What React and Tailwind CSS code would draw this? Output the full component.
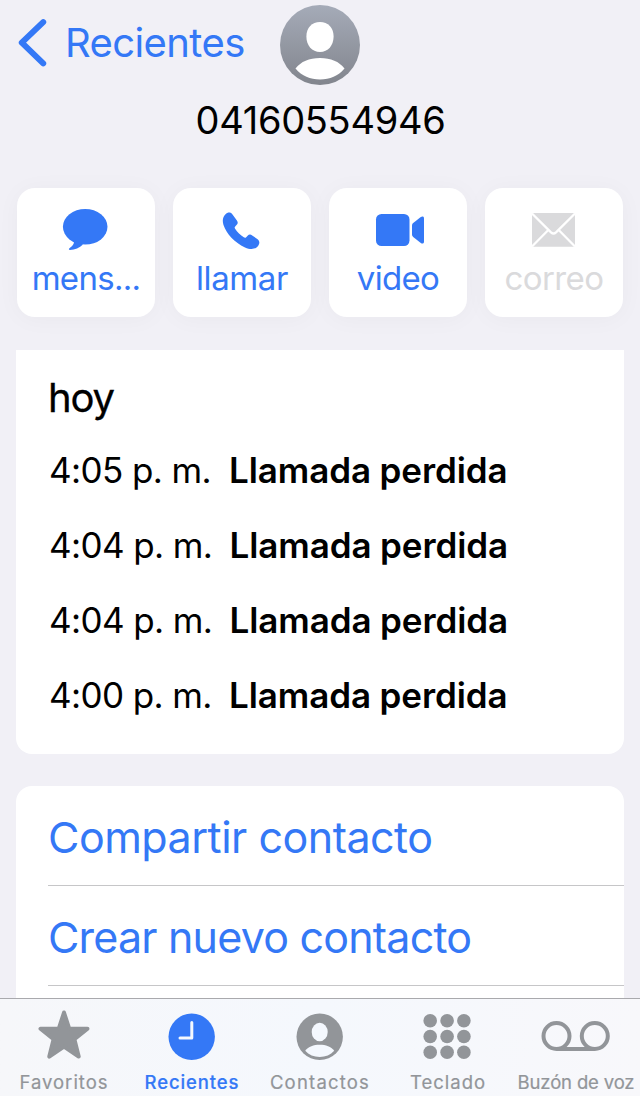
import { useState } from "react";
import clsx from "clsx";

const calls = [
  { time: "4:05 p. m.", label: "Llamada perdida", width: "w-[180px]" },
  { time: "4:04 p. m.", label: "Llamada perdida", width: "w-[180.5px]" },
  { time: "4:04 p. m.", label: "Llamada perdida", width: "w-[180.5px]" },
  { time: "4:00 p. m.", label: "Llamada perdida", width: "w-[180px]" },
];

const Avatar = () => (
  <svg viewBox="0 0 80 80" className="w-20 h-20">
    <defs>
      <linearGradient id="avatarFill" x1="0" y1="0" x2="0" y2="1">
        <stop offset="0" stopColor="#a5abb8" />
        <stop offset="1" stopColor="#82858d" />
      </linearGradient>
    </defs>
    <circle cx="40" cy="40" r="40" fill="url(#avatarFill)" />
    <path
      d="M40 17C48 17 53.600 22.500 53.600 31.500S48 47 40 47 26.400 40.500 26.400 31.500 32 17 40 17Z"
      fill="#fff"
    />
    <path
      d="M15.500 63.500C21 56.500 29 53 40 53s19 3.500 24.500 10.500C58 71 50 74.500 40 74.500S22 71 15.500 63.500Z"
      fill="#fff"
    />
  </svg>
);

const MessageIcon = () => (
  <svg viewBox="0 0 60 60" className="w-[60px] h-[60px]" fill="currentColor">
    <ellipse cx="29.2" cy="26.8" rx="22.3" ry="17.8" />
    <path d="M17 40c1.500 2 1.200 3.500-.5 5.500-1.200 1.500-2.700 2.400-3.300 3-.7.7-.2 1.500.8 1.500 5 0 9.500-2.500 13-5.500Z" />
  </svg>
);

const PhoneIcon = () => (
  <svg viewBox="0 0 60 60" className="w-[60px] h-[60px]" fill="currentColor">
    <path d="M13.300 14.600C15.800 12 18.600 12 20.500 14.400L24.900 20.400C26.200 22.300 25.900 23.700 24.500 25.100L23.200 26.400C22.400 27.300 22.500 27.900 23.100 28.800C25.200 32 28.500 35.300 31.800 37.300C32.700 37.900 33.400 37.900 34.200 37.200L35.600 35.800C36.900 34.400 38.400 34.200 40.200 35.400L45.600 39.200C48 41 47.900 44.300 45.400 46.700C42.900 49.200 38.500 49.900 33 47.400C22.500 42.500 14.500 34 11.500 25C10 20.400 11 16.900 13.300 14.600Z" />
  </svg>
);

const VideoIcon = () => (
  <svg viewBox="0 0 60 60" className="w-[60px] h-[60px]" fill="currentColor">
    <rect x="8" y="14" width="33.5" height="32" rx="5.5" />
    <path d="M44 25.800c0-1.200.3-1.900 1.200-2.700l7.600-6.100c1.600-1.200 3.200-.6 3.200 1.200v23.600c0 1.800-1.600 2.400-3.200 1.200l-7.600-6.100c-.9-.8-1.200-1.500-1.200-2.700Z" />
  </svg>
);

const MailIcon = () => (
  <svg viewBox="0 0 60 60" className="w-[60px] h-[60px]">
    <rect x="8" y="13" width="43" height="33.7" rx="1.5" fill="currentColor" />
    <path
      d="M8 13.500 27 32.400q2.500 2.300 5 0L51 13.500M8 46.500 24.300 30M51 46.500 34.700 30"
      fill="none"
      stroke="#fff"
      strokeWidth="2.3"
    />
  </svg>
);

const actions = [
  { label: "mens...", Icon: MessageIcon, text: "tracking-[-0.7px]" },
  { label: "llamar", Icon: PhoneIcon, text: "tracking-[-0.4px]" },
  { label: "video", Icon: VideoIcon, text: "tracking-[-0.7px]" },
  { label: "correo", Icon: MailIcon, text: "tracking-[-0.6px]", disabled: true },
];

// the tab icons share one box, so they all line up with the labels
const StarIcon = () => (
  <svg viewBox="0.5 0 80 71" className="w-20 h-[71px]">
    <path
      d="M40.500 13.500 45.700 29.700H64L50.900 40.300 55.200 57.600 40.500 47.600 25.800 57.600 30.100 40.300 17 29.700H35.300Z"
      fill="currentColor"
      stroke="currentColor"
      strokeWidth="4"
      strokeLinejoin="round"
    />
  </svg>
);

const ClockIcon = () => (
  <svg viewBox="0.5 0 80 71" className="w-20 h-[71px]">
    <circle cx="40.2" cy="37.8" r="23.2" fill="currentColor" />
    <path
      d="M40.300 23.500V39H28.500"
      fill="none"
      stroke="#f4f8fe"
      strokeWidth="3"
      strokeLinecap="round"
      strokeLinejoin="round"
    />
  </svg>
);

const ContactIcon = () => (
  <svg viewBox="0.5 0 80 71" className="w-20 h-[71px]">
    <circle cx="40.2" cy="37.8" r="23.2" fill="currentColor" />
    <ellipse cx="40.2" cy="33" rx="8" ry="9.3" fill="#f4f8fe" />
    <path
      d="M25.700 51.700C29 47.500 34 45.800 40.200 45.800s11.200 1.700 14.500 5.900C51 55.800 46 57.900 40.200 57.900S29.400 55.800 25.700 51.700Z"
      fill="#f4f8fe"
    />
  </svg>
);

const KeypadIcon = () => (
  <svg viewBox="0.5 0 80 71" className="w-20 h-[71px]" fill="currentColor">
    {[21.7, 37.5, 53.3].map((cy) =>
      [22.7, 39.6, 56.4].map((cx) => (
        <circle key={`${cx}-${cy}`} cx={cx} cy={cy} r="6.8" />
      ))
    )}
  </svg>
);

const VoicemailIcon = () => (
  <svg
    viewBox="0.5 0 80 71"
    className="w-20 h-[71px]"
    fill="none"
    stroke="currentColor"
    strokeWidth="4"
  >
    <circle cx="21" cy="37" r="13" />
    <circle cx="59.3" cy="37" r="13" />
    <path d="M21 50h38.300" />
  </svg>
);

const tabs = [
  { id: "Favoritos", Icon: StarIcon, text: "tracking-[1px]" },
  { id: "Recientes", Icon: ClockIcon, text: "tracking-[0.9px]" },
  { id: "Contactos", Icon: ContactIcon, text: "tracking-[1.2px]" },
  { id: "Teclado", Icon: KeypadIcon, text: "tracking-[1px]" },
  { id: "Buzón de voz", Icon: VoicemailIcon, text: "tracking-[-0.15px]" },
];

const App = () => {
  const [activeTab, setActiveTab] = useState("Recientes");

  return (
    <div className="w-[640px] h-[1096px] flex flex-col overflow-hidden bg-[#f1f0f6] text-black font-['Inter',sans-serif]">
      {/* Header */}
      <header className="shrink-0">
        <div className="grid grid-cols-[280px_80px_1fr] h-[85px]">
          <button className="flex items-center text-[#3478f6]">
            <svg
              viewBox="0 0 65 85"
              className="w-[65px] h-[85px] shrink-0"
              fill="none"
              stroke="currentColor"
              strokeWidth="6"
              strokeLinecap="round"
              strokeLinejoin="round"
            >
              <path d="M43.200 22.200 21.800 42.700 43.200 63.300" />
            </svg>
            <span className="text-[40px] tracking-[-0.6px]">Recientes</span>
          </button>
          <div className="self-end">
            <Avatar />
          </div>
        </div>
        <h1 className="pl-px text-center text-[38px] leading-[70px] tracking-[-0.3px]">
          04160554946
        </h1>
      </header>

      {/* Quick actions */}
      <div className="shrink-0 grid grid-cols-4 gap-[18px] px-[17px] pt-[33px]">
        {actions.map(({ label, Icon, text, disabled }) => (
          <button
            key={label}
            disabled={disabled}
            className={clsx(
              "h-[129px] pt-3 flex flex-col items-center rounded-[18px] bg-white shadow-[0_2px_24px_rgba(0,0,0,0.035)]",
              disabled ? "text-[#dadadc]" : "text-[#3478f6]"
            )}
          >
            <Icon />
            <span className={clsx("text-[33px] leading-9 whitespace-nowrap", text)}>
              {label}
            </span>
          </button>
        ))}
      </div>

      {/* Call log */}
      <section className="shrink-0 mx-4 mt-[33px] pt-3 pb-[21px] px-[33px] rounded-b-2xl bg-white">
        <h2 className="-ml-px text-[40px] leading-[71px] tracking-[-1.2px] [-webkit-text-stroke:0.3px_#000]">
          hoy
        </h2>
        {calls.map((call, i) => (
          <div key={i} className="flex h-[75px] items-center text-[35px] whitespace-nowrap">
            <span className={clsx("tracking-[-0.6px]", call.width)}>
              {call.time}
            </span>
            <span className="font-semibold tracking-[-0.1px]">{call.label}</span>
          </div>
        ))}
      </section>

      {/* Contact options */}
      <section className="flex-1 min-h-0 overflow-hidden mx-4 mt-8 pl-8 rounded-t-2xl bg-white text-[#3478f6] text-[43px]">
        <button className="flex w-full h-[100px] pt-1 items-center border-b border-[#c6c6c8]">
          <span className="tracking-[-0.5px]">Compartir contacto</span>
        </button>
        <button className="flex w-full h-[100px] pt-1 items-center border-b border-[#c6c6c8]">
          <span className="tracking-[-0.8px]">Crear nuevo contacto</span>
        </button>
      </section>

      {/* Tab bar */}
      <nav className="shrink-0 grid grid-cols-5 h-[98px] border-t border-[#a9a9ad] bg-linear-to-r from-[#f6f7fa] via-[#f5f8fd] to-[#f8f8fb]">
        {tabs.map(({ id, Icon, text }) => (
          <button
            key={id}
            onClick={() => setActiveTab(id)}
            className={clsx(
              "flex flex-col items-center",
              activeTab === id ? "text-[#3478f6] font-medium" : "text-[#929599]"
            )}
          >
            <Icon />
            <span
              className={clsx(
                "text-[18.5px] leading-6 whitespace-nowrap [-webkit-text-stroke:0.2px]",
                text
              )}
            >
              {id}
            </span>
          </button>
        ))}
      </nav>
    </div>
  );
};

export default App;
